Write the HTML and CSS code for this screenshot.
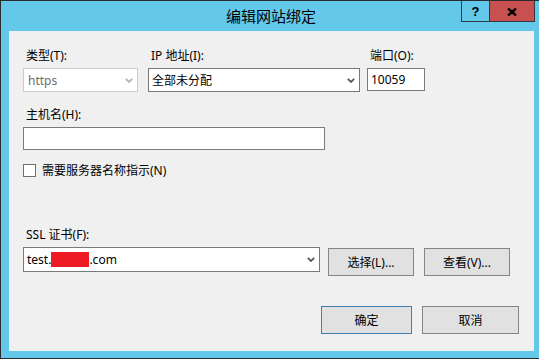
FILE: index.html
```html
<!DOCTYPE html>
<html>
<head>
    <title>编辑网站绑定</title>
    <link rel="stylesheet" href="styles.css">
</head>
<body>
    <div class="window">
        <div class="titlebar">
            <span class="title">编辑网站绑定</span>
            <div class="caption">
                <span class="cap-btn help">?</span>
                <span class="cap-btn close">
                    <svg width="10" height="8" viewBox="0 0 10 8"><path d="M1 0.5 L9 7.5 M9 0.5 L1 7.5" stroke="#000" stroke-width="2.4" fill="none"/></svg>
                </span>
            </div>
        </div>

        <div class="client">
            <div class="row-top">
                <div class="field f-type">
                    <label class="lbl">类型(T):</label>
                    <div class="combo disabled">
                        <span>https</span>
                        <svg class="chev" width="8" height="5" viewBox="0 0 8 5"><path d="M0.8 0.8 L4 4 L7.2 0.8" stroke="#b4b4b4" stroke-width="1.8" fill="none"/></svg>
                    </div>
                </div>
                <div class="field f-ip">
                    <label class="lbl">IP 地址(I):</label>
                    <div class="combo">
                        <span>全部未分配</span>
                        <svg class="chev" width="8" height="5" viewBox="0 0 8 5"><path d="M0.8 0.8 L4 4 L7.2 0.8" stroke="#5a5a5a" stroke-width="1.8" fill="none"/></svg>
                    </div>
                </div>
                <div class="field f-port">
                    <label class="lbl">端口(O):</label>
                    <div class="textbox port">10059</div>
                </div>
            </div>

            <div class="field f-host">
                <label class="lbl">主机名(H):</label>
                <div class="textbox host"></div>
            </div>

            <div class="check-row">
                <span class="checkbox"></span>
                <span>需要服务器名称指示(N)</span>
            </div>

            <div class="field f-ssl">
                <label class="lbl">SSL 证书(F):</label>
                <div class="ssl-row">
                    <div class="combo ssl">
                        <span>test.<span class="redact"></span>.com</span>
                        <svg class="chev" width="8" height="5" viewBox="0 0 8 5"><path d="M0.8 0.8 L4 4 L7.2 0.8" stroke="#5a5a5a" stroke-width="1.8" fill="none"/></svg>
                    </div>
                    <button class="btn btn-select">选择(L)...</button>
                    <button class="btn btn-view">查看(V)...</button>
                </div>
            </div>

            <div class="footer">
                <button class="btn btn-ok">确定</button>
                <button class="btn btn-cancel">取消</button>
            </div>
        </div>
    </div>
</body>
</html>
```

FILE: styles.css
```css
* { margin: 0; padding: 0; box-sizing: border-box; }
body { font-family: "Noto Sans", "Noto Sans CJK SC", sans-serif; font-size: 12px; color: #000; background: #63c8ea; }

.window {
    width: 539px; height: 359px; background: #63c8ea;
    border: 1px solid #2b2b2b; border-right: none;
    display: flex; flex-direction: column;
}
.titlebar { height: 30px; display: grid; grid-template-columns: 1fr auto 1fr; }
.title { grid-column: 2; align-self: center; font-size: 15px; line-height: 20px; padding-left: 2px; }
.caption { grid-column: 3; justify-self: end; align-self: start; display: flex; margin-right: 4px; }
.cap-btn {
    height: 21px; border: 1px solid #2f3b42; border-top: none;
    display: flex; align-items: center; justify-content: center;
}
.help { width: 28px; border-right: none; font-family: "Liberation Sans", sans-serif; font-weight: bold; font-size: 13px; }
.close { width: 46px; background: #c75050; padding-top: 1px; }

.client {
    margin: 0 5px 7px 8px; height: 320px; background: #f0f0f0;
    padding: 17px 15px 0 14px;
}
.lbl { display: block; line-height: 16px; padding-left: 3px; margin-bottom: 4px; }

.row-top { display: flex; align-items: flex-start; }
.f-type { width: 115px; }
.f-ip { width: 212px; margin-left: 10px; }
.f-port { width: 58px; margin-left: 7px; }

.combo {
    height: 24px; background: #fff; border: 1px solid #7a7a7a;
    display: flex; align-items: center; justify-content: space-between;
    padding: 0 4px 0 3px; white-space: nowrap;
}
.combo.disabled { border-color: #cccccc; color: #6d6d6d; padding-left: 4px; }
.chev { display: block; }

.textbox { height: 23px; background: #fff; border: 1px solid #7a7a7a; padding-left: 3px; line-height: 21px; }
.host { width: 302px; }
.f-host { margin-top: 15px; }

.check-row { display: flex; align-items: center; height: 16px; margin-top: 12px; gap: 6px; }
.checkbox { width: 13px; height: 13px; background: #fff; border: 1px solid #707070; }

.f-ssl { margin-top: 49px; }
.ssl-row { display: flex; align-items: flex-start; }
.combo.ssl { width: 297px; height: 25px; }
.redact { display: inline-block; width: 38px; height: 15px; background: #ed1c24; vertical-align: middle; margin-top: -2px; }

.btn {
    height: 28px; background: #e1e1e1; border: 1px solid #858585;
    font-family: inherit; font-size: 12px; color: #000;
}
.btn-select, .btn-view { width: 86px; margin-top: 1px; }
.btn-select { margin-left: 8px; }
.btn-view { margin-left: 10px; }

.footer { display: flex; justify-content: flex-end; gap: 10px; margin-top: 30px; }
.btn-ok { width: 91px; border-color: #3c7fb1; }
.btn-cancel { width: 97px; }
```
